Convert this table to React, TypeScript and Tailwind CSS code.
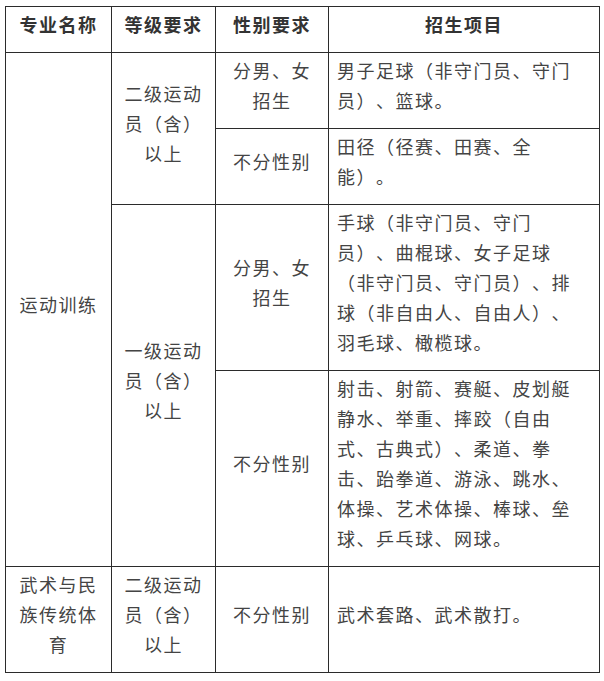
const cell =
  "border border-[#2b2b2b] px-[8px] pt-[2px] pb-[13px] align-middle";

export default function App() {
  return (
    <div className="min-h-screen bg-white pl-[5px] pt-[6px] font-['Noto_Sans_CJK_SC',sans-serif] text-[18px] leading-[30px] tracking-[1.5px] text-[#444] [text-spacing-trim:space-all]">
      <table className="w-[594px] table-fixed border-collapse">
        <colgroup>
          <col className="w-[106px]" />
          <col className="w-[104px]" />
          <col className="w-[113px]" />
          <col className="w-[271px]" />
        </colgroup>
        <thead>
          <tr className="font-semibold text-[#333]">
            <th className={`${cell} text-center`}>专业名称</th>
            <th className={`${cell} text-center`}>等级要求</th>
            <th className={`${cell} text-center`}>性别要求</th>
            <th className={`${cell} text-center`}>招生项目</th>
          </tr>
        </thead>
        <tbody>
          <tr>
            <td rowSpan={4} className={`${cell} text-center`}>
              运动训练
            </td>
            <td rowSpan={2} className={`${cell} text-center`}>
              二级运动员（含）以上
            </td>
            <td className={`${cell} text-center`}>分男、女招生</td>
            <td className={`${cell} pr-[18px] text-left align-top`}>
              男子足球（非守门员、守门员）、篮球。
            </td>
          </tr>
          <tr>
            <td className={`${cell} text-center`}>不分性别</td>
            <td className={`${cell} pr-[18px] text-left align-top`}>
              田径（径赛、田赛、全能）。
            </td>
          </tr>
          <tr>
            <td rowSpan={2} className={`${cell} text-center`}>
              一级运动员（含）以上
            </td>
            <td className={`${cell} text-center`}>分男、女招生</td>
            <td className={`${cell} pr-[18px] text-left align-top`}>
              手球（非守门员、守门员）、曲棍球、女子足球（非守门员、守门员）、排球（非自由人、自由人）、羽毛球、橄榄球。
            </td>
          </tr>
          <tr>
            <td className={`${cell} text-center`}>不分性别</td>
            <td className={`${cell} pr-[18px] text-left align-top`}>
              射击、射箭、赛艇、皮划艇静水、举重、摔跤（自由式、古典式）、柔道、拳击、跆拳道、游泳、跳水、体操、艺术体操、棒球、垒球、乒乓球、网球。
            </td>
          </tr>
          <tr>
            <td className={`${cell} text-center`}>武术与民族传统体育</td>
            <td className={`${cell} text-center`}>二级运动员（含）以上</td>
            <td className={`${cell} text-center`}>不分性别</td>
            <td className={`${cell} pr-[18px] text-left`}>武术套路、武术散打。</td>
          </tr>
        </tbody>
      </table>
    </div>
  );
}
